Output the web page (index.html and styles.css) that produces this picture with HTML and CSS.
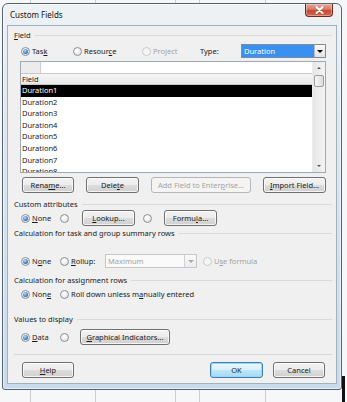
FILE: index.html
```html
<!DOCTYPE html>
<html>
<head>
<meta charset="utf-8">
<title>Custom Fields</title>
<link rel="stylesheet" href="styles.css">
</head>
<body>
<div class="desk">
  <div class="window">
    <div class="titlebar">
      <span class="title">Custom Fields</span>
      <span class="close"><svg width="11" height="8" viewBox="0 0 11 8"><path d="M2.5 1 L8.5 7 M8.5 1 L2.5 7" stroke="#fff" stroke-width="1.8" stroke-linecap="round"/></svg></span>
    </div>
    <div class="client">
      <div class="ghead"><span><u>F</u>ield</span></div>
      <div class="frow">
        <div class="opt w-task"><span class="radio on"></span><span class="lbl">Tas<u>k</u></span></div>
        <div class="opt w-res"><span class="radio"></span><span class="lbl">Resour<u>c</u>e</span></div>
        <div class="opt w-proj dis"><span class="radio"></span><span class="lbl">Pro<u>j</u>ect</span></div>
        <div class="w-type">Type:</div>
        <div class="type-sel"><span class="val">Duration</span><span class="arr"><span class="tri"></span></span></div>
      </div>
      <div class="list">
        <div class="list-body">
          <div class="edit-row"><span class="corner"></span><span class="edit"></span></div>
          <div class="hdr">Field</div>
          <div class="item sel">Duration1</div>
          <div class="item">Duration2</div>
          <div class="item">Duration3</div>
          <div class="item">Duration4</div>
          <div class="item">Duration5</div>
          <div class="item">Duration6</div>
          <div class="item">Duration7</div>
          <div class="item">Duration8</div>
        </div>
        <div class="vscroll">
          <span class="sb-btn"><span class="tri-up"></span></span>
          <span class="thumb"></span>
          <span class="sb-space"></span>
          <span class="sb-btn"><span class="tri-dn"></span></span>
        </div>
      </div>
      <div class="btnrow">
        <span class="btn w52">Rena<u>m</u>e...</span>
        <span class="btn w53">Dele<u>t</u>e</span>
        <span class="btn w100 off">Add Field to Enter<u>p</u>rise...</span>
        <span class="btn w63"><u>I</u>mport Field...</span>
      </div>
      <div class="ghead h13 mt4"><span>Custom attributes</span></div>
      <div class="crow">
        <div class="opt"><span class="radio on"></span><span class="lbl"><u>N</u>one</span></div>
        <div class="opt"><span class="radio"></span></div>
        <div class="opt"><span class="btn w53"><u>L</u>ookup...</span></div>
        <div class="opt"><span class="radio"></span></div>
        <div class="opt"><span class="btn w53">Formu<u>l</u>a...</span></div>
      </div>
      <div class="ghead"><span>Calculation for task and group summary rows</span></div>
      <div class="rrow">
        <div class="opt"><span class="radio on"></span><span class="lbl">N<u>o</u>ne</span></div>
        <div class="opt"><span class="radio"></span><span class="lbl"><u>R</u>ollup:</span></div>
        <div class="opt"><span class="combo"><span class="cval">Maximum</span><span class="carr"><span class="tri grey"></span></span></span></div>
        <div class="opt dis"><span class="radio"></span><span class="lbl">U<u>s</u>e formula</span></div>
      </div>
      <div class="ghead mt5"><span>Calculation for assignment rows</span></div>
      <div class="arow">
        <div class="opt"><span class="radio on"></span><span class="lbl">Non<u>e</u></span></div>
        <div class="opt"><span class="radio"></span><span class="lbl">Roll down unless m<u>a</u>nually entered</span></div>
      </div>
      <div class="ghead mt11"><span>Values to display</span></div>
      <div class="vrow">
        <div class="opt"><span class="radio on"></span><span class="lbl"><u>D</u>ata</span></div>
        <div class="opt"><span class="radio"></span></div>
        <div class="opt"><span class="btn w90"><u>G</u>raphical Indicators...</span></div>
      </div>
      <div class="sep"></div>
      <div class="footer">
        <span class="btn w52"><u>H</u>elp</span>
        <span class="grow"></span>
        <span class="btn w53 def">OK</span>
        <span class="btn w52">Cancel</span>
      </div>
    </div>
  </div>
</div>
</body>
</html>
```

FILE: styles.css
```css
* { box-sizing: border-box; }
html, body { margin: 0; padding: 0; }
body {
  width: 347px;
  height: 402px;
  overflow: hidden;
  font-family: "Noto Sans", "Open Sans", sans-serif;
  font-size: 7.5px;
  color: #1a1a1a;
}
u { text-decoration: underline; text-underline-offset: 1px; text-decoration-thickness: 1px; }

.desk {
  width: 347px;
  height: 402px;
  overflow: hidden;
  padding: 3px 0 0 2px;
  background:
    linear-gradient(#111, #111) 342px 376px / 3px 26px no-repeat,
    linear-gradient(#c9cdd2, #c9cdd2) 30px 0 / 1px 100% no-repeat,
    linear-gradient(#c9cdd2, #c9cdd2) 95px 0 / 1px 100% no-repeat,
    linear-gradient(#c9cdd2, #c9cdd2) 175px 0 / 1px 100% no-repeat,
    linear-gradient(#c9cdd2, #c9cdd2) 199px 0 / 1px 100% no-repeat,
    linear-gradient(#c9cdd2, #c9cdd2) 265px 0 / 1px 100% no-repeat,
    #f6f7f8;
}

.window {
  width: 340px;
  height: 387px;
  border: 1px solid #56636f;
  border-radius: 6px 6px 3px 3px;
  background: linear-gradient(to bottom, #eef2f5 0, #e0e8ef 30%, #c8dbec 100%);
  padding: 0 5px 5px 5px;
  display: flex;
  flex-direction: column;
  box-shadow: inset 0 0 0 1px rgba(255,255,255,0.55);
}

.titlebar {
  height: 22px;
  display: flex;
  align-items: flex-start;
  flex: none;
}
.title {
  margin: 6px 0 0 2px;
  line-height: 10px;
  font-size: 8px;
  color: #111;
}
.close {
  margin-left: auto;
  margin-right: 3px;
  width: 28px;
  height: 13px;
  border: 1px solid #6b2a20;
  border-top: none;
  border-radius: 0 0 4px 4px;
  background: linear-gradient(to bottom, #e5a696 0, #d27a66 45%, #c14a33 55%, #d7684e 100%);
  display: flex;
  align-items: center;
  justify-content: center;
  box-shadow: inset 0 0 0 1px rgba(255,255,255,0.35);
}

.client {
  height: 357px;
  flex: none;
  background: #f0f0f0;
  box-shadow: 0 0 0 1px #a2b1c0;
  padding: 2px 4px 0 6px;
  display: flex;
  flex-direction: column;
}

/* group headers */
.ghead {
  display: flex;
  align-items: center;
  height: 14px;
  line-height: 10px;
  white-space: nowrap;
  flex: none;
}
.ghead::after {
  content: "";
  flex: 1;
  height: 1px;
  background: #d7dbe0;
  margin-left: 4px;
  margin-top: 1px;
}
.h13 { height: 13px; }
.mt4 { margin-top: 4px; }
.mt5 { margin-top: 5px; }
.mt11 { margin-top: 11px; }

/* radio options */
.opt {
  display: flex;
  align-items: center;
  white-space: nowrap;
}
.lbl { margin-left: 2px; line-height: 10px; }
.radio {
  position: relative;
  flex: none;
  width: 9px;
  height: 9px;
  border-radius: 50%;
  border: 1px solid #8c9096;
  background: radial-gradient(circle at 40% 35%, #ffffff 0, #f2f2f2 40%, #d4d6d8 100%);
}
.radio.on::after {
  content: "";
  position: absolute;
  left: 1px;
  top: 1px;
  width: 5px;
  height: 5px;
  border-radius: 50%;
  background: radial-gradient(circle at 40% 35%, #b3dcff 0, #3d86d4 55%, #1c4f8e 100%);
}
.dis { color: #a3a3a3; }
.dis .radio { border-color: #c9cbcd; background: #f5f5f5; }

/* field row */
.frow {
  display: flex;
  align-items: center;
  height: 14px;
  margin: 2px 0 0 7px;
  flex: none;
}
.w-task { width: 52px; }
.w-res { width: 69px; }
.w-proj { width: 58px; }
.w-type { width: 41px; line-height: 10px; }
.type-sel {
  width: 85px;
  height: 14px;
  display: flex;
  border: 1px solid #7f8d9b;
  background: #fff;
}
.type-sel .val {
  flex: 1;
  background: #3a8ff2;
  color: #fff;
  padding-left: 2px;
  line-height: 12px;
}
.type-sel .arr {
  width: 11px;
  border-left: 1px solid #b8bcc0;
  background: linear-gradient(#fafafa, #e2e2e2);
  display: flex;
  align-items: center;
  justify-content: center;
}
.tri {
  width: 0;
  height: 0;
  border-left: 3px solid transparent;
  border-right: 3px solid transparent;
  border-top: 3px solid #000;
}
.tri.grey { border-top-color: #a8a8a8; }

/* list */
.list {
  margin: 3px 0 0 6px;
  width: 306px;
  height: 112px;
  border: 1px solid #a0a8b0;
  background: #fff;
  display: flex;
  flex: none;
}
.list-body {
  flex: 1;
  overflow: hidden;
  display: flex;
  flex-direction: column;
}
.edit-row {
  height: 12px;
  display: flex;
  border-bottom: 1px solid #c9c9c9;
  flex: none;
}
.corner {
  width: 20px;
  background: #ececec;
  border-right: 1px solid #cfcfcf;
}
.edit { flex: 1; background: #fff; }
.hdr {
  height: 11px;
  line-height: 10px;
  padding-left: 1px;
  background: linear-gradient(#f6f6f6, #e7e7e7);
  border-bottom: 1px solid #c6c6c6;
  flex: none;
}
.item {
  height: 11.6px;
  line-height: 11.6px;
  padding-left: 1px;
  flex: none;
}
.item.sel { background: #000; color: #fff; }

.vscroll {
  width: 13px;
  flex: none;
  display: flex;
  flex-direction: column;
  align-items: center;
  background: linear-gradient(to right, #e6e6e6, #f4f4f4);
  border-left: 1px solid #ececec;
}
.sb-btn {
  height: 12px;
  width: 100%;
  display: flex;
  align-items: center;
  justify-content: center;
  flex: none;
}
.tri-up, .tri-dn {
  width: 0;
  height: 0;
  border-left: 2px solid transparent;
  border-right: 2px solid transparent;
}
.tri-up { border-bottom: 2px solid #555; }
.tri-dn { border-top: 2px solid #555; }
.thumb {
  width: 10px;
  height: 12px;
  margin-top: 1px;
  border: 1px solid #9a9ea3;
  border-radius: 2px;
  background: linear-gradient(to right, #f7f7f7, #dcdcdc);
  flex: none;
}
.sb-space { flex: 1; }

/* buttons */
.btn {
  height: 16px;
  display: inline-flex;
  align-items: center;
  justify-content: center;
  border: 1px solid #707070;
  border-radius: 3px;
  background: linear-gradient(#f3f3f3 0, #ececec 50%, #dddddd 50%, #d0d0d0 100%);
  box-shadow: inset 0 0 0 1px rgba(255,255,255,0.75);
  white-space: nowrap;
  line-height: 10px;
  flex: none;
}
.btn.off {
  border-color: #b3b7bb;
  background: #f4f4f4;
  color: #a3a3a3;
  box-shadow: none;
}
.btn.def {
  border-color: #3c7fb1;
  background: linear-gradient(#eaf6fd 0, #d9f0fc 50%, #bee6fd 50%, #a7d9f5 100%);
  box-shadow: inset 0 0 0 1px #97d8f8;
}
.w52 { width: 52px; }
.w53 { width: 53px; }
.w63 { width: 63px; }
.w90 { width: 90px; }
.w100 { width: 100px; }

.btnrow {
  display: flex;
  gap: 12px;
  margin: 4px 0 0 8px;
  flex: none;
}

.crow {
  display: grid;
  grid-template-columns: 39px 22px 61px 21px 53px;
  align-items: center;
  height: 16px;
  margin-left: 7px;
  flex: none;
}

.rrow {
  display: grid;
  grid-template-columns: 39px 45px 98px auto;
  align-items: center;
  height: 14px;
  margin: 14px 0 0 7px;
  flex: none;
}
.combo {
  width: 92px;
  height: 14px;
  display: flex;
  border: 1px solid #c3c8cd;
  background: #fafafa;
}
.cval {
  flex: 1;
  color: #a3a3a3;
  padding-left: 2px;
  line-height: 12px;
}
.carr {
  width: 12px;
  border-left: 1px solid #cdd1d5;
  background: linear-gradient(#f9f9f9, #ececec);
  display: flex;
  align-items: center;
  justify-content: center;
}

.arow {
  display: grid;
  grid-template-columns: 39px auto;
  align-items: center;
  height: 14px;
  margin-left: 7px;
  flex: none;
}

.vrow {
  display: grid;
  grid-template-columns: 39px 20px 90px;
  align-items: center;
  height: 16px;
  margin: 3px 0 0 7px;
  flex: none;
}

.sep {
  height: 1px;
  background: #d6d9dc;
  margin-top: 9px;
  flex: none;
}

.footer {
  display: flex;
  gap: 10px;
  margin: 7px 7px 0 8px;
  flex: none;
}
.grow { flex: 1; }
```
